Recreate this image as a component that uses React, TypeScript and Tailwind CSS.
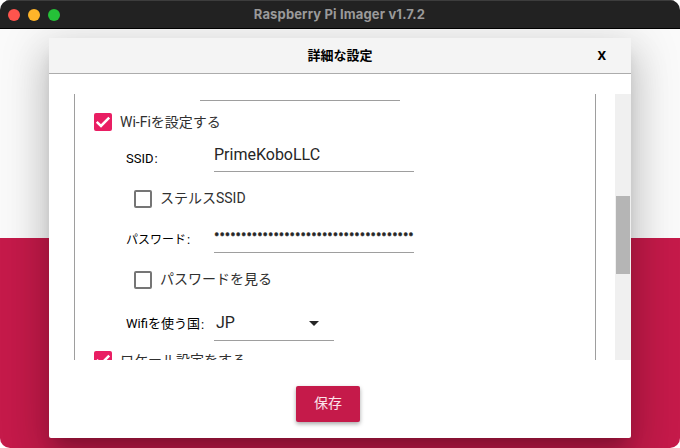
import type { ReactNode } from "react";

function Checkbox({ checked = false }: { checked?: boolean }) {
  return (
    <span
      className={
        checked
          ? "flex h-[18px] w-[18px] shrink-0 rounded-[2px] bg-[#e91e63]"
          : "flex h-[18px] w-[18px] shrink-0 rounded-[2px] border-2 border-[#757575]"
      }
    >
      {checked && (
        <svg viewBox="0 0 18 18" className="h-[18px] w-[18px]" fill="none" stroke="#fff" strokeWidth="2.5">
          <path d="M2.7 8.8 L7 12.9 L15.2 4.7" />
        </svg>
      )}
    </span>
  );
}

function Option({ checked, className, children }: { checked?: boolean; className: string; children: ReactNode }) {
  return (
    <label className={`flex shrink-0 items-center gap-2 text-[14px] leading-5 text-[#303030] ${className}`}>
      <Checkbox checked={checked} />
      <span className="-mt-px whitespace-nowrap">{children}</span>
    </label>
  );
}

function Field({ label, className, children }: { label: ReactNode; className: string; children: ReactNode }) {
  return (
    <div className={`flex shrink-0 pl-[51px] ${className}`}>
      <span className="mt-0.5 w-[88px] shrink-0 self-center whitespace-nowrap text-[13px] leading-4 text-black">
        {label}
        <span className="pl-px">:</span>
      </span>
      {children}
    </div>
  );
}

export default function App() {
  return (
    <div className="h-[448px] w-[680px] overflow-hidden bg-white font-[Roboto,'Noto_Sans_CJK_JP',sans-serif]">
      <div className="flex h-full flex-col overflow-hidden rounded-[10px] bg-[linear-gradient(#fafafa_238px,#c51a4a_238px)]">
        <header className="relative z-10 flex h-[29px] shrink-0 items-center border-t border-b border-t-[#3d3d3d] border-b-black bg-[#222]">
          <div className="flex w-[68px] gap-2 pl-2">
            <span className="h-3 w-3 rounded-full bg-[#ff544d]" />
            <span className="h-3 w-3 rounded-full bg-[#ffb429]" />
            <span className="h-3 w-3 rounded-full bg-[#25c138]" />
          </div>
          <h1 className="-mt-px flex-1 pr-[69px] text-center font-[family-name:Inter,sans-serif] text-[13px] leading-4 font-bold tracking-[0.15px] text-[#9a9a9a]">
            Raspberry Pi Imager v1.7.2
          </h1>
        </header>

        <main className="mx-[49px] mt-[9px] flex h-[400px] shrink-0 flex-col rounded-b-[2px] bg-white shadow-[0_11px_15px_-7px_rgba(0,0,0,0.2),0_24px_38px_3px_rgba(0,0,0,0.14),0_9px_46px_8px_rgba(0,0,0,0.12)]">
          <div className="flex h-9 shrink-0 items-center border-b border-[#acacac] bg-[#f4f4f4] text-[13px] font-bold text-black">
            <h2 className="flex-1 pl-[51px] text-center">詳細な設定</h2>
            <button className="w-[51px] pl-[17.5px] text-left text-[13.5px] font-bold">X</button>
          </div>

          <div className="mt-5 flex h-[266px] shrink-0 overflow-hidden pl-[25px]">
            <section className="flex w-[522px] flex-col overflow-hidden border-x border-[#9e9e9e]">
              <div className="ml-[125px] h-[7px] w-[200px] shrink-0 border-b border-[#9e9e9e]" />
              <Option checked className="h-[42px] pl-[19px]">Wi-Fiを設定する</Option>
              <Field label="SSID" className="h-[29px]">
                <div className="w-[200px] border-b border-[#9e9e9e] text-[16px] leading-[23px] text-[#262626]">PrimeKoboLLC</div>
              </Field>
              <Option className="h-[53px] pl-[59px]">ステルスSSID</Option>
              <Field label={<span className="text-[12px]">パスワード</span>} className="h-[28px]">
                <div className="w-[200px] overflow-hidden border-b border-[#9e9e9e] text-[16px] leading-[20px] whitespace-nowrap text-[#262626] [-webkit-text-stroke:0.4px_#262626]">
                  •••••••••••••••••••••••••••••••••••••
                </div>
              </Field>
              <Option className="h-[53px] pl-[59px]">パスワードを見る</Option>
              <Field label={<span className="relative -top-px">Wifiを使う国</span>} className="h-[35px]">
                <div className="flex w-[120px] items-center justify-between border-b border-[#9e9e9e] pr-[15px] pl-[2px] text-[16px] text-[#262626]">
                  JP
                  <svg viewBox="0 0 10 5" className="h-[5px] w-[10px]">
                    <path d="M0 0H10L5 5Z" fill="#262626" />
                  </svg>
                </div>
              </Field>
              <Option checked className="h-[38px] pl-[19px]">ロケール設定をする</Option>
            </section>
            <div className="ml-[19px] w-4 bg-[#f0f0f0] px-px pt-[102px]">
              <div className="h-[78px] bg-[#b5b5b5]" />
            </div>
          </div>

          <div className="flex flex-1 justify-center pt-[26px] pr-6">
            <button className="h-9 w-16 rounded-[2px] bg-[#c51a4a] pb-0.5 text-[14px] text-[#fbe4ea] shadow-[0_2px_4px_rgba(0,0,0,0.35)]">
              保存
            </button>
          </div>
        </main>
      </div>
    </div>
  );
}
